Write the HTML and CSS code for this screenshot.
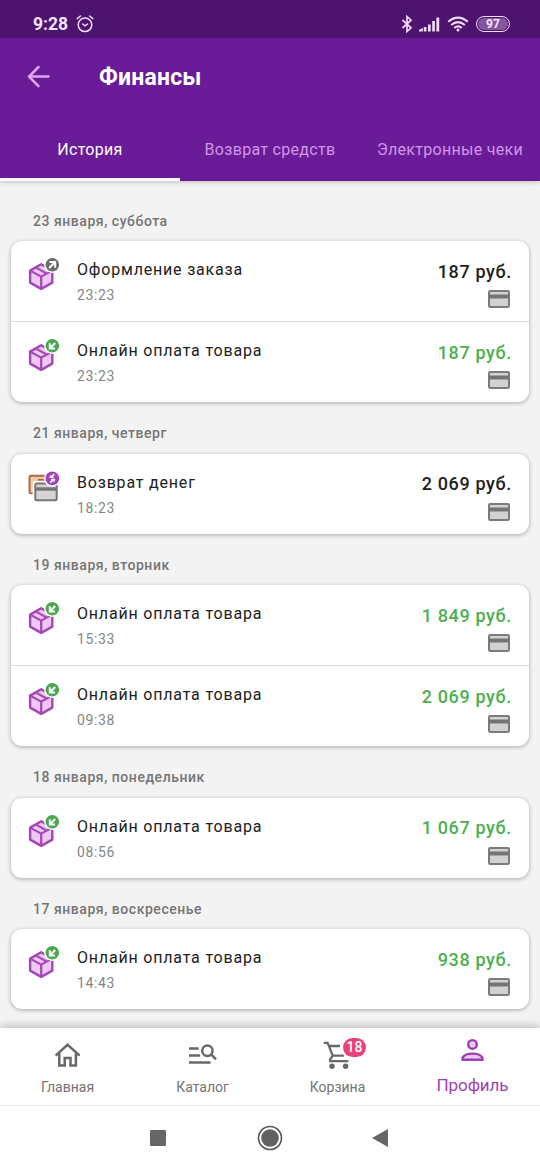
FILE: index.html
```
<!DOCTYPE html>
<html lang="ru">
<head>
<meta charset="utf-8">
<title>Финансы</title>
<link rel="stylesheet" href="styles.css">
</head>
<body>
<svg class="defs" width="0" height="0">
  <symbol id="box" viewBox="0 0 32 36">
    <path d="M13.2 8.3 2.1 14.6v12l11.1 6.3 11.1-6.3v-12z" fill="#ecc8f3" stroke="#a545b6" stroke-width="2.4" stroke-linejoin="round"/>
    <path d="M2.1 14.6l11.1 6 11.1-6M13.2 20.6v12.2M7.6 11.4l11.2 6.2" fill="none" stroke="#a545b6" stroke-width="2.2"/>
    <circle cx="24.3" cy="8.7" r="8.3" fill="#fff"/>
  </symbol>
  <symbol id="order" viewBox="0 0 32 36">
    <use href="#box"/>
    <circle cx="24.3" cy="8.7" r="6.8" fill="#6b6b6b"/>
    <path d="M21.5 6h5.7v5.7M26.9 6.3l-5.7 5.7" fill="none" stroke="#fff" stroke-width="2"/>
  </symbol>
  <symbol id="paid" viewBox="0 0 32 36">
    <use href="#box"/>
    <circle cx="24.3" cy="8.7" r="6.8" fill="#4aa850"/>
    <path d="M21.8 6.2v5.2H27M22 11.2l5.2-5.2" fill="none" stroke="#fff" stroke-width="2"/>
  </symbol>
  <symbol id="refund" viewBox="0 0 32 36">
    <rect x="1.5" y="6.8" width="20" height="17.6" rx="1.5" fill="#f0c8a4" stroke="#a76b42" stroke-width="1.9"/>
    <path d="M10 10.8h8" stroke="#a76b42" stroke-width="1.6"/>
    <rect x="4.7" y="12" width="26" height="21" rx="2" fill="#fff"/>
    <rect x="7.3" y="14.5" width="21.4" height="16.8" rx="1.3" fill="#d4d4d4" stroke="#757575" stroke-width="2"/>
    <path d="M7.3 20h21.4" stroke="#757575" stroke-width="3.4"/>
    <circle cx="24.3" cy="9.4" r="8.3" fill="#fff"/>
    <circle cx="24.3" cy="9.4" r="6.8" fill="#a63fbb"/>
    <path d="M26.4 5.2 23 8.2h2.6M22.2 13.6l3.4-3H23M22.6 6.4v2.4M26 10v2.4" fill="none" stroke="#fff" stroke-width="1.6"/>
  </symbol>
  <symbol id="card" viewBox="0 0 22 18">
    <rect x="1" y="1" width="20" height="16" rx="1.2" fill="#d2d2d2" stroke="#7b7b7b" stroke-width="2"/>
    <path d="M1 6.5h20" stroke="#747474" stroke-width="4"/>
  </symbol>
</svg>
<div class="screen">
  <header class="top">
    <div class="status">
      <span class="clock">9:28</span>
      <svg class="alarm" width="18" height="18" viewBox="0 0 18 18" fill="none" stroke="#f0dcfa" stroke-width="1.5" stroke-linecap="round"><circle cx="9" cy="9.8" r="6.8"/><path d="M1.2 3.6 4.4 1M16.8 3.6 13.6 1M6.7 9l2.3 1.8 2.6-1.8"/></svg>
      <span class="spacer"></span>
      <svg width="12" height="18" viewBox="0 0 12 18" fill="none" stroke="#f0dcfa" stroke-width="1.7"><path d="M1.5 5 10 12.8 6 16.5v-15l4 3.7L1.5 13"/></svg>
      <svg class="signal" width="21" height="16" viewBox="0 0 21 16" fill="#f0dcfa"><path d="M0 15.5V14l3.8-2v3.5zM4.8 11h2.7v4.5H4.8zM9 8.5h2.7v7H9zM13.2 5h2.7v10.5h-2.7zM17.4 1.5h2.8v14h-2.8z"/></svg>
      <svg class="wifi" width="22" height="16" viewBox="0 0 22 16" fill="none" stroke="#f0dcfa" stroke-width="2.1"><path d="M1.2 5.8Q11-2.6 20.8 5.8M4.2 9Q11 3.2 17.8 9M7.2 12Q11 8.8 14.8 12"/><circle cx="11" cy="14" r="1.5" fill="#f0dcfa" stroke="none"/></svg>
      <span class="battery"><span>97</span></span>
    </div>
    <div class="bar">
      <svg width="24" height="24" viewBox="0 0 24 24" fill="none" stroke="#dfa6ee" stroke-width="2.5" stroke-linecap="round" stroke-linejoin="round"><path d="M21.5 11.6H2M11.5 2 2 11.6l9.5 9.6"/></svg>
      <h1>Финансы</h1>
    </div>
    <nav class="tabs">
      <span class="tab active">История</span>
      <span class="tab">Возврат средств</span>
      <span class="tab">Электронные чеки</span>
    </nav>
  </header>
  <main class="list">
    <h2>23 января, суббота</h2>
    <section class="group">
      <div class="row"><svg class="kind"><use href="#order"/></svg><div class="info"><b>Оформление заказа</b><time>23:23</time></div><div class="sum"><span>187 руб.</span><svg><use href="#card"/></svg></div></div>
      <div class="row"><svg class="kind"><use href="#paid"/></svg><div class="info"><b>Онлайн оплата товара</b><time>23:23</time></div><div class="sum plus"><span>187 руб.</span><svg><use href="#card"/></svg></div></div>
    </section>
    <h2>21 января, четверг</h2>
    <section class="group">
      <div class="row"><svg class="kind"><use href="#refund"/></svg><div class="info"><b>Возврат денег</b><time>18:23</time></div><div class="sum"><span>2 069 руб.</span><svg><use href="#card"/></svg></div></div>
    </section>
    <h2>19 января, вторник</h2>
    <section class="group">
      <div class="row"><svg class="kind"><use href="#paid"/></svg><div class="info"><b>Онлайн оплата товара</b><time>15:33</time></div><div class="sum plus"><span>1 849 руб.</span><svg><use href="#card"/></svg></div></div>
      <div class="row"><svg class="kind"><use href="#paid"/></svg><div class="info"><b>Онлайн оплата товара</b><time>09:38</time></div><div class="sum plus"><span>2 069 руб.</span><svg><use href="#card"/></svg></div></div>
    </section>
    <h2>18 января, понедельник</h2>
    <section class="group">
      <div class="row"><svg class="kind"><use href="#paid"/></svg><div class="info"><b>Онлайн оплата товара</b><time>08:56</time></div><div class="sum plus"><span>1 067 руб.</span><svg><use href="#card"/></svg></div></div>
    </section>
    <h2>17 января, воскресенье</h2>
    <section class="group">
      <div class="row"><svg class="kind"><use href="#paid"/></svg><div class="info"><b>Онлайн оплата товара</b><time>14:43</time></div><div class="sum plus"><span>938 руб.</span><svg><use href="#card"/></svg></div></div>
    </section>
  </main>
  <nav class="bottom">
    <a class="item">
      <svg width="30" height="28" viewBox="0 0 30 28" fill="none" stroke="#686868" stroke-width="2.5"><path d="M2.6 14.6 14.6 3.8l12 10.8M6.3 12.4v12.2h5.4V17h5.8v7.6h5.4V12.4"/></svg>
      <span>Главная</span>
    </a>
    <a class="item">
      <svg width="30" height="28" viewBox="0 0 30 28" fill="none" stroke="#686868" stroke-width="2.5"><path d="M1 7.6h9.6M1 14.6h11.2M1 21.6H22.6M23 13.2l5 5.2"/><circle cx="19.4" cy="9.7" r="5.2"/></svg>
      <span>Каталог</span>
    </a>
    <a class="item">
      <svg width="30" height="28" viewBox="0 0 30 28" fill="none" stroke="#686868" stroke-width="2.3"><path d="M.8 1.8h3.8L9.8 14.6h11M5.8 5H17M9.8 14.6l-2.6 3.8V20.2h18.2"/><circle cx="9" cy="25.3" r="2.7" fill="#686868" stroke="none"/><circle cx="22.6" cy="25.3" r="2.7" fill="#686868" stroke="none"/></svg>
      <span>Корзина</span>
      <i class="count">18</i>
    </a>
    <a class="item current">
      <svg width="30" height="28" viewBox="0 0 30 28" fill="#ecc8f3" stroke="#9c3fb0" stroke-width="2.4"><circle cx="14.5" cy="8.4" r="4.3"/><path d="M4.6 23.7v-2q2-4.1 9.9-4.1t9.9 4.1v2z"/></svg>
      <span>Профиль</span>
    </a>
  </nav>
  <footer class="system">
    <svg width="16" height="16"><rect width="16" height="16" rx="1" fill="#666"/></svg>
    <svg width="26" height="26" viewBox="0 0 26 26"><circle cx="13" cy="13" r="11.5" fill="none" stroke="#555" stroke-width="1.6"/><circle cx="13" cy="13" r="8.8" fill="#626262"/></svg>
    <svg width="16" height="18"><path d="M0 9 16 0v18z" fill="#666"/></svg>
  </footer>
</div>
</body>
</html>
```
FILE: styles.css
```
* { box-sizing: border-box; }
body { margin: 0; font-family: Roboto, "Noto Sans", sans-serif; background: #f3f3f3; }
svg { display: block; flex: none; }
.defs { position: absolute; }
.screen { width: 540px; height: 1170px; display: flex; flex-direction: column; overflow: hidden; }
.top { height: 181px; flex: none; background: #6a1b98; box-shadow: 0 1px 5px rgba(0,0,0,.22); }
.status { height: 38px; background: #4c136f; display: flex; align-items: center; padding: 10px 30px 0 33px; color: #f5e4fb; }
.clock { font-size: 17.5px; font-weight: 700; }
.alarm { margin-left: 8px; }
.spacer { flex: 1; }
.signal { margin-left: 6px; }
.wifi { margin-left: 7px; }
.battery { margin-left: 7.5px; width: 34px; height: 16px; border: 1.5px solid #f0dcfa; border-radius: 8px; padding: 1px; font-size: 12px; font-weight: 700; line-height: 12px; text-align: center; }
.battery span { display: block; background: #84569f; border-radius: 6px; }
.bar { height: 78px; display: flex; align-items: center; padding: 0 27px; gap: 48px; }
.bar h1 { margin: 2px 0 0; font-size: 23px; line-height: 28px; font-weight: 700; letter-spacing: .2px; color: #fff; }
.tabs { height: 65px; display: grid; grid-template-columns: repeat(3, 1fr); }
.tab { text-align: center; font-size: 16px; line-height: 67px; letter-spacing: .3px; white-space: nowrap; color: #d295e8; height: 65px; }
.tab.active { color: #fff; border-bottom: 3px solid #fff; }
.list { flex: 1; min-height: 0; padding: 8.5px 11px 0; overflow: hidden; }
.list h2 { margin: 0; height: 51.5px; padding: 21px 22px 0; font-size: 14px; line-height: 20px; font-weight: 500; letter-spacing: .54px; color: #757575; }
.group { background: #fff; border-radius: 11px; box-shadow: 0 1px 4px rgba(0,0,0,.32); }
.row { height: 80px; display: flex; padding: 0 17px; }
.row + .row { height: 81px; border-top: 1px solid #dcdcdc; }
.kind { width: 32px; height: 36px; margin-top: 15px; }
.info { flex: 1; margin-left: 17px; padding-top: 18px; display: flex; flex-direction: column; }
.info b { font-size: 16px; line-height: 22px; font-weight: 400; letter-spacing: .81px; color: #212121; }
.info time { margin-top: 4px; font-size: 14px; line-height: 20px; letter-spacing: .65px; color: #858585; }
.sum { padding-top: 17.5px; display: flex; flex-direction: column; align-items: flex-end; font-size: 18px; line-height: 26px; font-weight: 500; letter-spacing: .65px; color: #212121; }
.sum.plus { color: #4caf50; }
.sum svg { width: 22px; height: 18px; margin: 5.5px 2.5px 0 0; }
.bottom { height: 78px; flex: none; position: relative; background: #fff; border-bottom: 1px solid #ececec; box-shadow: 0 -1px 9px rgba(0,0,0,.28); display: grid; grid-template-columns: repeat(4, 1fr); }
.item { position: relative; display: flex; flex-direction: column; align-items: center; padding-top: 13px; font-size: 14px; letter-spacing: 0; color: #737373; }
.item span { margin-top: 8px; line-height: 20px; }
.item.current { padding-top: 8px; font-size: 17px; letter-spacing: -.1px; color: #9c3fb0; }
.item.current span { margin-top: 11px; }
.count { position: absolute; left: 73px; top: 10px; width: 23px; height: 19px; border-radius: 10px; background: #ec407a; color: #fff; font: 500 14px/19px Roboto, sans-serif; text-align: center; }
.system { height: 64px; flex: none; position: relative; background: #fff; display: flex; justify-content: space-between; align-items: center; padding: 0 152px 0 150px; }
.system svg:nth-child(2) { margin-left: 2px; }
```
